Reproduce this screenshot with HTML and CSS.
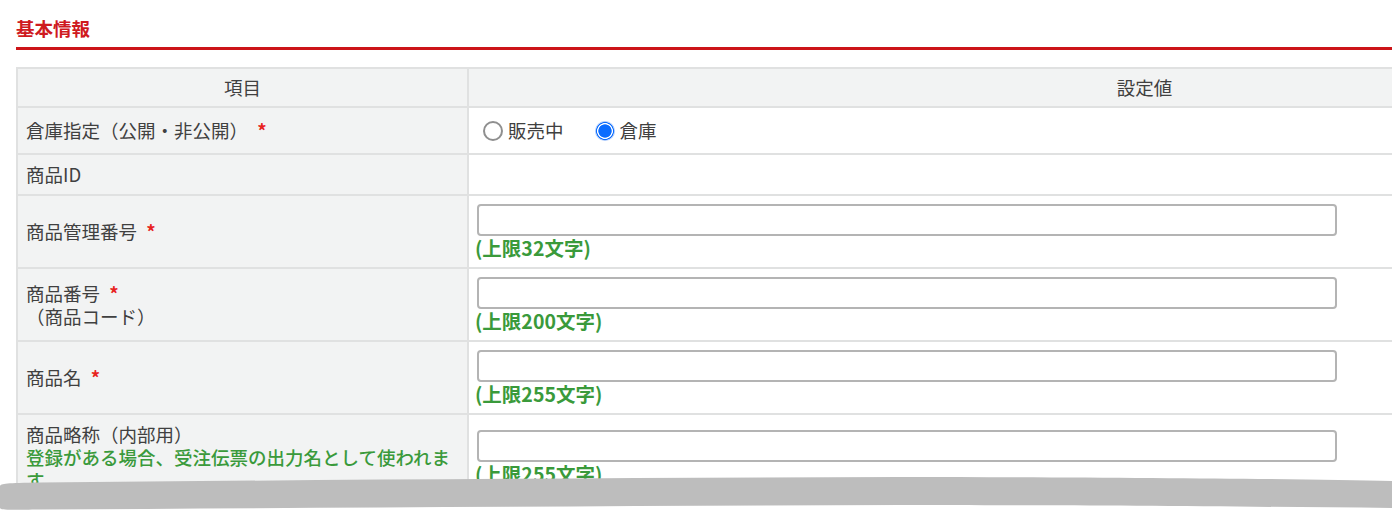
FILE: index.html
```html
<!DOCTYPE html>
<html lang="ja">
<head>
<meta charset="utf-8">
<title>基本情報</title>
<link rel="stylesheet" href="styles.css">
</head>
<body>
<div class="page">
  <h2 class="section-title">基本情報</h2>
  <table class="form-table">
    <colgroup><col class="col-label"><col class="col-value"></colgroup>
    <thead>
      <tr><th>項目</th><th>設定値</th></tr>
    </thead>
    <tbody>
      <tr>
        <td class="label">倉庫指定（公開・非公開） <span class="req">*</span></td>
        <td class="value">
          <div class="radios">
            <label class="radio"><input type="radio" name="stock"><span>販売中</span></label>
            <label class="radio"><input type="radio" name="stock" checked><span>倉庫</span></label>
          </div>
        </td>
      </tr>
      <tr>
        <td class="label">商品ID</td>
        <td class="value"></td>
      </tr>
      <tr>
        <td class="label">商品管理番号 <span class="req">*</span></td>
        <td class="value"><input class="text" type="text"><div class="limit">(上限32文字)</div></td>
      </tr>
      <tr>
        <td class="label"><div>商品番号 <span class="req">*</span></div><div>（商品コード）</div></td>
        <td class="value"><input class="text" type="text"><div class="limit">(上限200文字)</div></td>
      </tr>
      <tr>
        <td class="label">商品名 <span class="req">*</span></td>
        <td class="value"><input class="text" type="text"><div class="limit">(上限255文字)</div></td>
      </tr>
      <tr>
        <td class="label"><div>商品略称（内部用）</div><div class="note">登録がある場合、受注伝票の出力名として使われます。</div></td>
        <td class="value"><input class="text" type="text"><div class="limit">(上限255文字)</div></td>
      </tr>
    </tbody>
  </table>
</div>
<svg class="torn" width="1392" height="40" viewBox="0 0 1392 40" preserveAspectRatio="none" aria-hidden="true">
  <path d="M0 36 C 200 37, 500 33, 700 32 C 900 31, 1150 33, 1392 34 L1392 40 L0 40 Z" fill="#ffffff"/>
  <path d="M0 13 C 1 10.5, 6 10, 40 9.5 C 300 7, 600 5, 900 4 C 1100 4, 1300 6, 1392 8 L1392 35 C 1200 33, 1000 32, 900 32 C 600 33, 300 35, 40 36.5 C 6 37, 1 37, 0 35 Z" fill="#bdbdbd"/>
</svg>
</body>
</html>
```
FILE: styles.css
```css
html, body {
  margin: 0;
  padding: 0;
  overflow: hidden;
  background: #ffffff;
}
body {
  font-family: "Noto Sans CJK JP", "Noto Sans", sans-serif;
  font-size: 18.5px;
  color: #404040;
}
.page {
  width: 1806px;
  padding: 0 16px;
}
.section-title {
  margin: 17px 0 0;
  padding-bottom: 7px;
  font-size: 18.5px;
  line-height: 23px;
  font-weight: bold;
  color: #cf1a1f;
  border-bottom: 3px solid #cc1418;
}
.form-table {
  margin-top: 17px;
  width: 1806px;
  table-layout: fixed;
  border-collapse: collapse;
}
.col-label { width: 451px; }
.form-table th,
.form-table td {
  border: 2px solid #e0e1e1;
  line-height: 23px;
  padding: 8px 8px;
  vertical-align: middle;
}
.form-table th {
  background: #f2f3f3;
  font-weight: normal;
  text-align: center;
  padding: 7px 8px 7px;
}
.form-table td.label {
  background: #f2f3f3;
  padding-left: 8px;
  padding-right: 6px;
}
.form-table td.value {
  background: #ffffff;
  padding-left: 6px;
}
.req {
  color: #e8231e;
  font-weight: bold;
  margin-left: 5px;
}
.note {
  color: #3a9a3b;
  font-weight: 500;
}
.radios {
  display: flex;
  align-items: center;
  height: 29px;
  padding-left: 7px;
  gap: 30px;
}
.radio {
  display: flex;
  align-items: center;
  gap: 5px;
}
.radio input {
  appearance: none;
  -webkit-appearance: none;
  margin: 0 0 0 1px;
  width: 20px;
  height: 20px;
  border-radius: 50%;
  border: 2px solid #8f8f8f;
  background: #ffffff;
  box-sizing: border-box;
}
.radio input:checked {
  border: none;
  background: radial-gradient(circle, #0a6cff 0 6.3px, #ffffff 7px 7.6px, #0a6cff 8.2px 8.6px, #a9c8fb 9.2px);
}
.text {
  display: block;
  box-sizing: border-box;
  width: 860px;
  height: 32px;
  margin: 0 0 0 2px;
  border: 2px solid #b4b4b4;
  border-radius: 4px;
  background: #ffffff;
}
.limit {
  color: #3a9a3b;
  font-weight: bold;
  font-size: 19.5px;
  line-height: 23px;
}
.torn {
  position: absolute;
  left: 0;
  top: 473px;
  display: block;
}
```
